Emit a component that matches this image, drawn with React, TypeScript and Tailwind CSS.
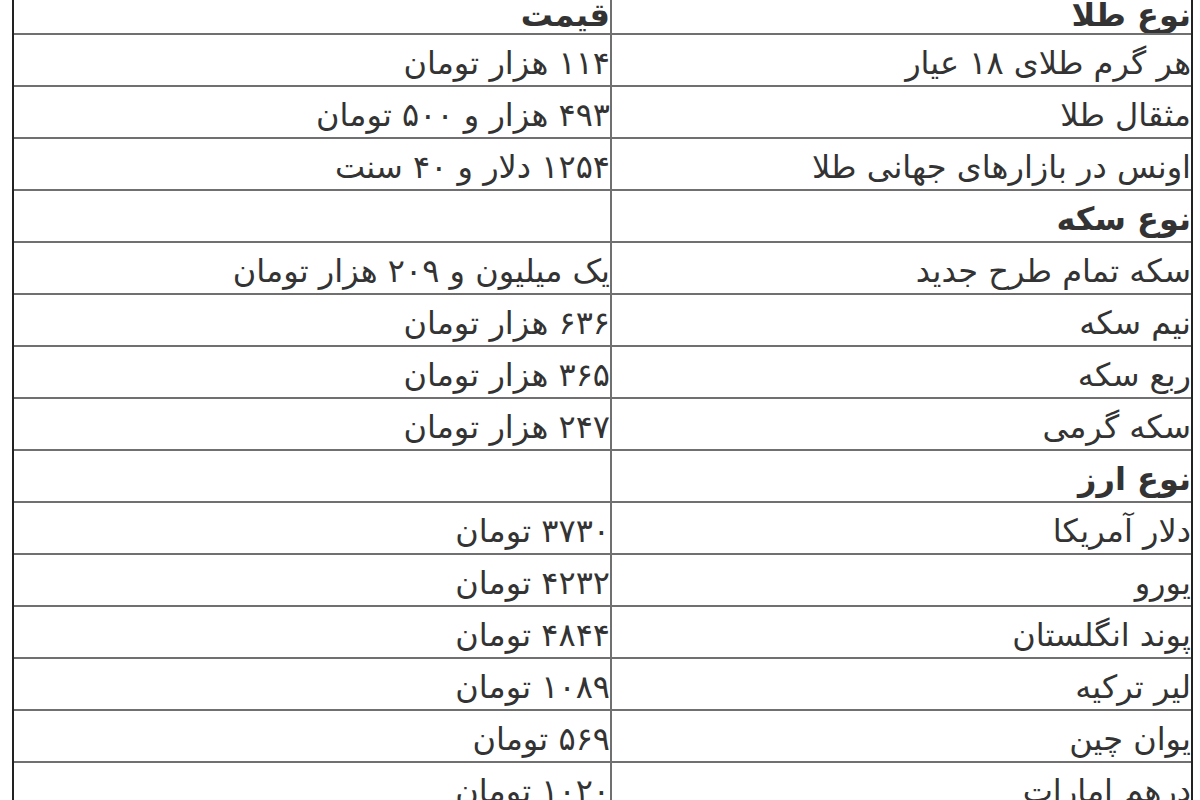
const rows: { name: string; price: string; bold?: boolean }[] = [
  { name: "هر گرم طلای ۱۸ عیار", price: "۱۱۴ هزار تومان" },
  { name: "مثقال طلا", price: "۴۹۳ هزار و ۵۰۰ تومان" },
  { name: "اونس در بازارهای جهانی طلا", price: "۱۲۵۴ دلار و ۴۰ سنت" },
  { name: "نوع سکه", price: "", bold: true },
  { name: "سکه تمام طرح جدید", price: "یک میلیون و ۲۰۹ هزار تومان" },
  { name: "نیم سکه", price: "۶۳۶ هزار تومان" },
  { name: "ربع سکه", price: "۳۶۵ هزار تومان" },
  { name: "سکه گرمی", price: "۲۴۷ هزار تومان" },
  { name: "نوع ارز", price: "", bold: true },
  { name: "دلار آمریکا", price: "۳۷۳۰ تومان" },
  { name: "یورو", price: "۴۲۳۲ تومان" },
  { name: "پوند انگلستان", price: "۴۸۴۴ تومان" },
  { name: "لیر ترکیه", price: "۱۰۸۹ تومان" },
  { name: "یوان چین", price: "۵۶۹ تومان" },
  { name: "درهم امارات", price: "۱۰۲۰ تومان" },
];

export default function App() {
  return (
    <div className="w-[1200px] h-[800px] overflow-hidden bg-white font-['DejaVu_Sans',sans-serif] text-[#333] text-[32px]">
      <div dir="rtl" className="ml-[12px] mr-[7px] border-x-2 border-[#222]">
        {/* header row, top is cut off */}
        <div className="flex h-[35px] border-b-2 border-[#707070] overflow-hidden">
          <div className="w-[581px] border-l-2 border-[#707070] flex items-end pb-[2px] font-bold leading-none">
            نوع طلا
          </div>
          <div className="flex-1 flex items-end pb-[2px] font-bold leading-none">قیمت</div>
        </div>
        {rows.map((r, i) => (
          <div key={i} className="flex h-[52px] border-b-2 border-[#707070]">
            <div
              className={
                "w-[581px] border-l-2 border-[#707070] flex items-center pt-[6px] leading-none " +
                (r.bold ? "font-bold" : "")
              }
            >
              {r.name}
            </div>
            <div className="flex-1 flex items-center pt-[6px] leading-none">{r.price}</div>
          </div>
        ))}
      </div>
    </div>
  );
}
